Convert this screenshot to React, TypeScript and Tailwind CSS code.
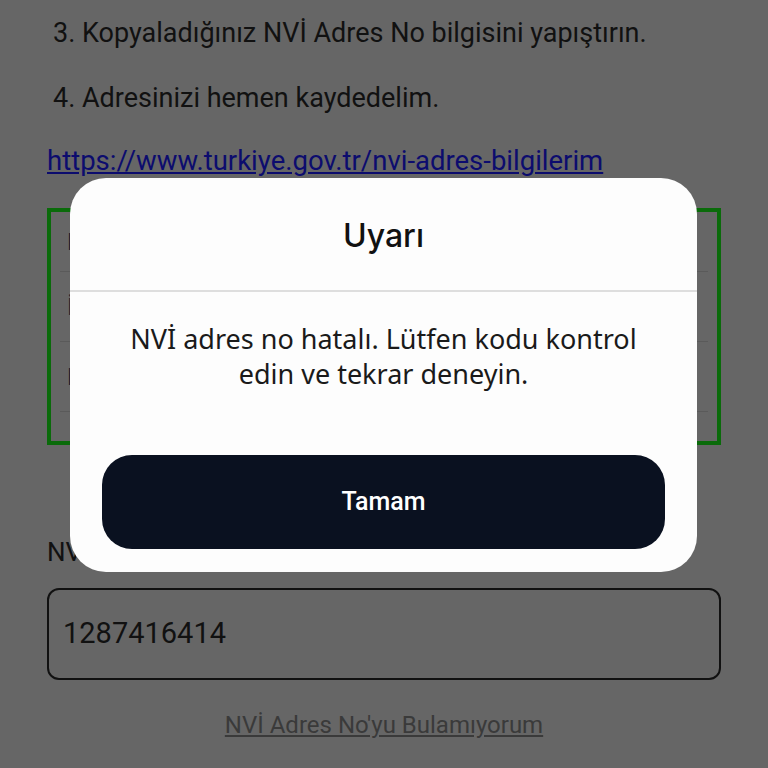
import React from "react";

const rows = ["Mahalle", "İlçe", "Bina No"];

export default function App() {
  return (
    <div className="relative h-[768px] w-[768px] overflow-hidden bg-[#666666] font-['Roboto',sans-serif]">
      {/* dimmed page */}
      <div className="px-[47px] pt-[15px]">
        <p className="pl-[6px] text-[27px] leading-[36px] text-[#111]">
          3. Kopyaladığınız NVİ Adres No bilgisini yapıştırın.
        </p>
        <p className="mt-[29px] pl-[6px] text-[27px] leading-[36px] text-[#111]">
          4. Adresinizi hemen kaydedelim.
        </p>
        <a className="mt-[27px] block text-[27.5px] leading-[36px] text-[#0c0c6e] underline">
          https://www.turkiye.gov.tr/nvi-adres-bilgilerim
        </a>

        <div className="mt-[29px] h-[237px] border-4 border-[#0a6b0a] px-[9px]">
          <div className="h-[60px] border-b border-[#5a5a5a]">
            <span className="block pt-[14px] pl-[7px] text-[24px] leading-[32px] text-[#1a2030]">{rows[0]}</span>
          </div>
          <div className="h-[70px] border-b border-[#5a5a5a]">
            <span className="block pt-[19px] pl-[7px] text-[24px] leading-[32px] text-[#1a2030]">{rows[1]}</span>
          </div>
          <div className="h-[70px] border-b border-[#5a5a5a]">
            <span className="block pt-[19px] pl-[7px] text-[24px] leading-[32px] text-[#1a2030]">{rows[2]}</span>
          </div>
        </div>

        <p className="mt-[90px] text-[26px] leading-[34px] text-[#111]">NVİ Adres No</p>
        <div className="mt-[19px] flex h-[92px] items-center rounded-[12px] border-2 border-[#111] px-[14px]">
          <span className="text-[29px] text-[#111]">1287416414</span>
        </div>
        <p className="mt-[30px] text-center text-[24px] leading-[30px] text-[#3a3a3a] underline">
          NVİ Adres No'yu Bulamıyorum
        </p>
      </div>

      {/* alert */}
      <div className="absolute left-[70px] top-[178px] flex h-[394px] w-[627px] flex-col rounded-[36px] bg-[#fdfdfd]">
        <div className="flex h-[114px] items-center justify-center border-b-2 border-[#dedede]">
          <h2 className="pt-[4px] font-['Inter',sans-serif] text-[32px] font-medium text-[#111]">Uyarı</h2>
        </div>
        <p className="mt-[29px] px-[30px] text-center font-['Noto_Sans',sans-serif] text-[27px] leading-[35px] text-[#1a1a1a]">
          NVİ adres no hatalı. Lütfen kodu kontrol edin ve tekrar deneyin.
        </p>
        <div className="mt-auto px-[32px] pb-[23px]">
          <button className="flex h-[94px] w-full items-center justify-center rounded-[30px] bg-[#0a1120] text-[25px] font-medium text-white">
            Tamam
          </button>
        </div>
      </div>
    </div>
  );
}
